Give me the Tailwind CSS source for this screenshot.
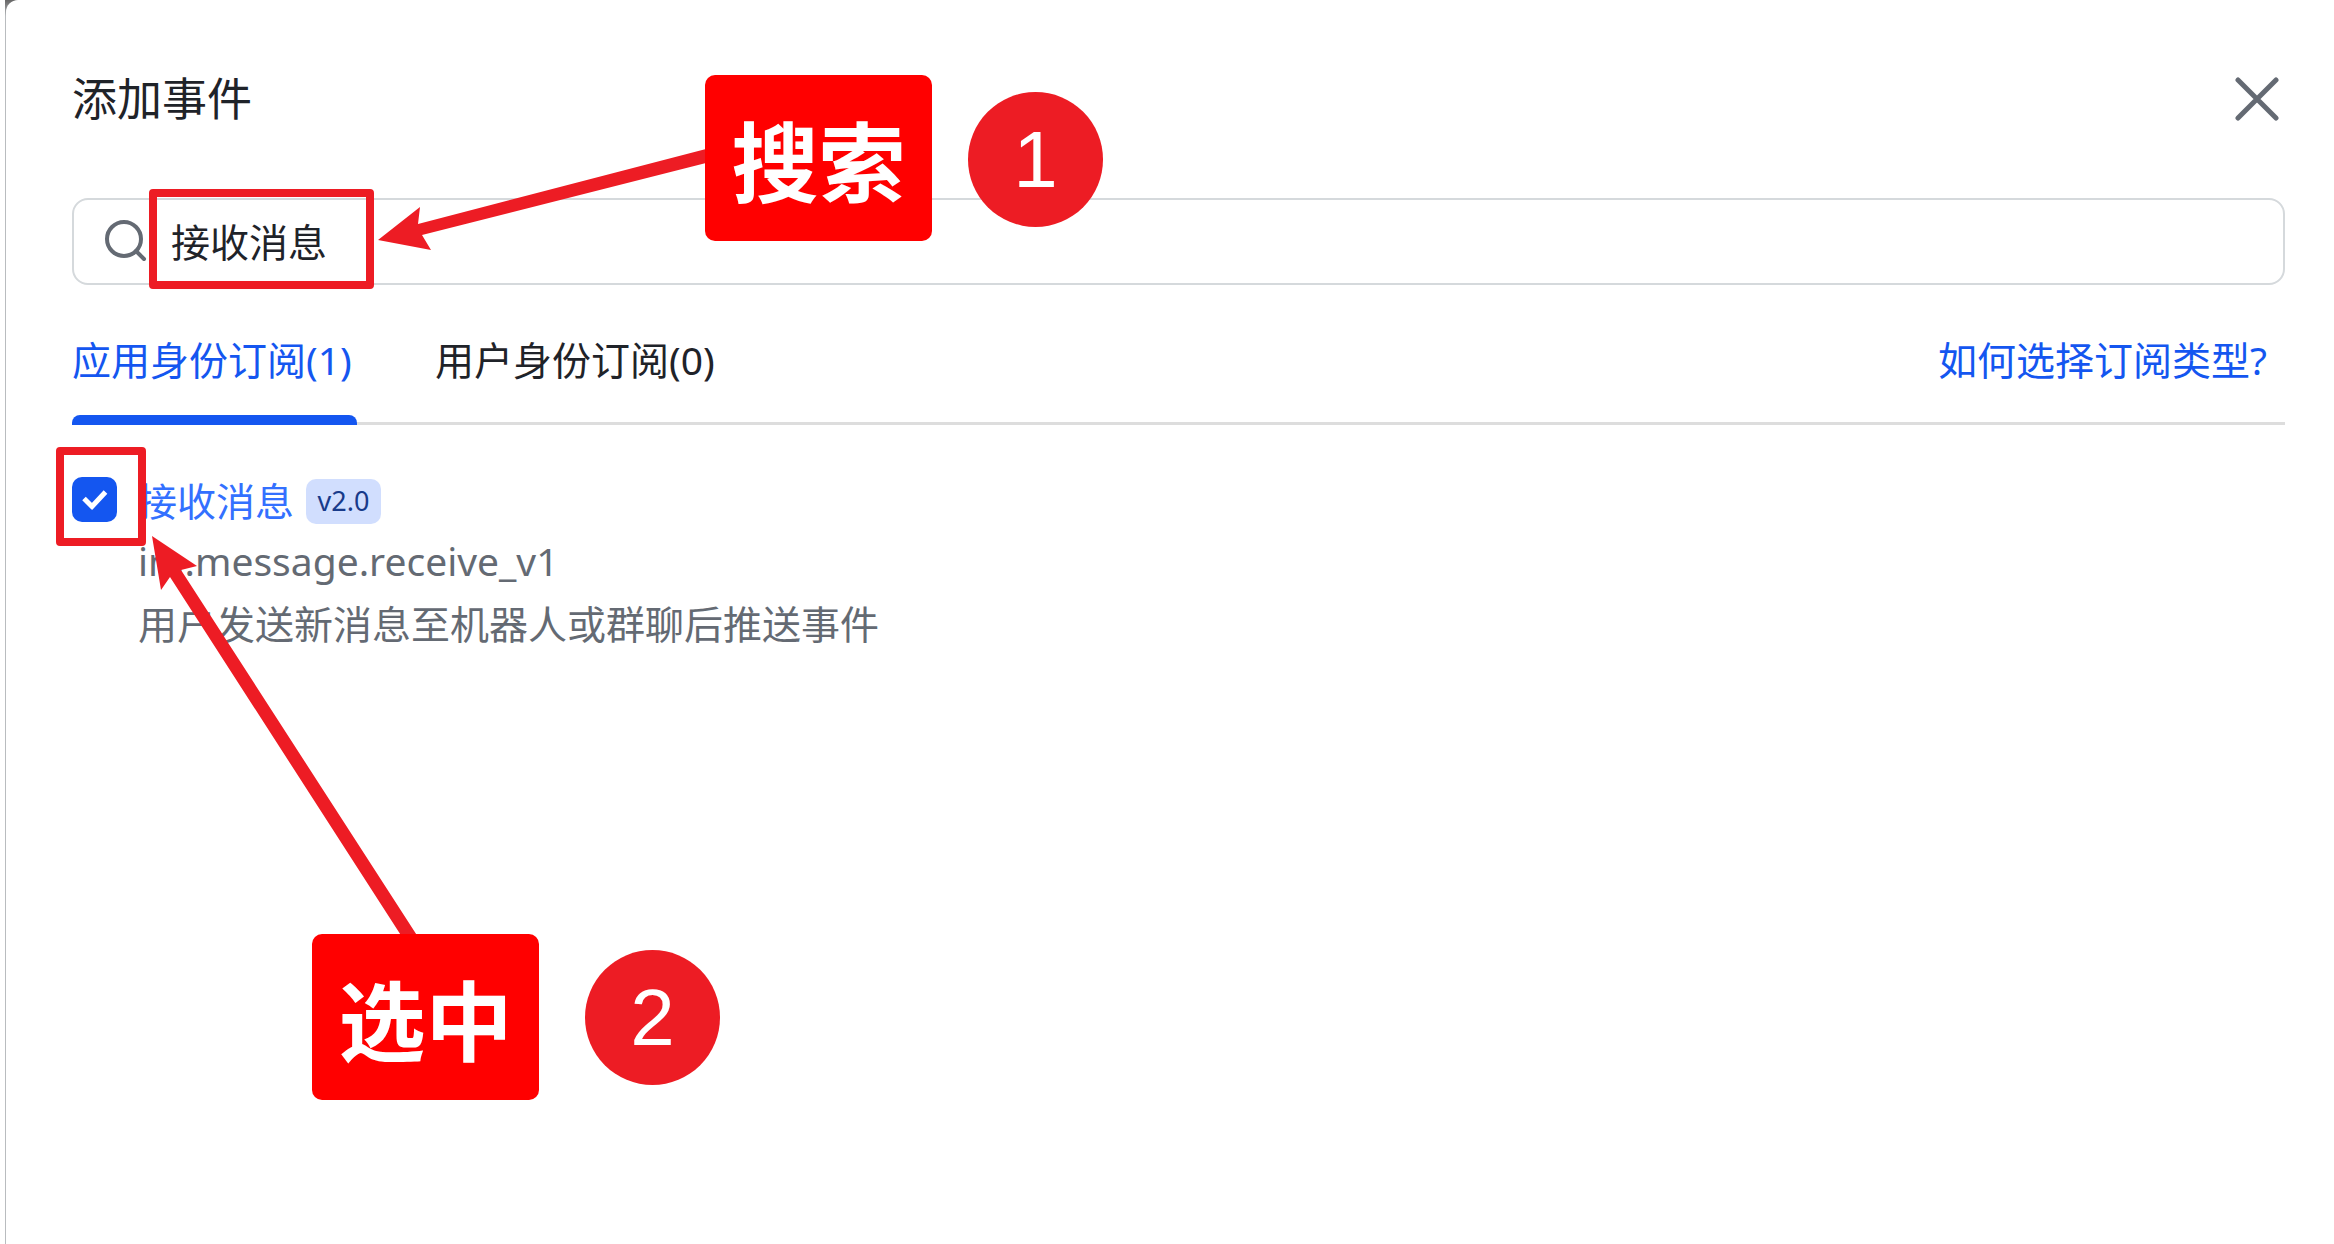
<!DOCTYPE html>
<html lang="zh-CN">
<head>
<meta charset="utf-8">
<title>添加事件</title>
<script src="https://cdn.jsdelivr.net/npm/@tailwindcss/browser@4"></script>
</head>
<body class="bg-white overflow-x-hidden">
<div class="relative ml-[5px] min-h-screen bg-linear-to-b from-[#666] to-[#b9bcbf] to-[16px] font-['Noto_Sans','Noto_Sans_CJK_SC',sans-serif] text-[39px] leading-[60px] text-[#1f2329]">
  <main class="ml-px min-h-screen rounded-tl-[12px] bg-white pt-[66px] pr-[49px] pl-[66px]">
    <header class="flex items-center justify-between">
      <h1 class="text-[45px] leading-[66px]">添加事件</h1>
      <button type="button" aria-label="关闭" class="mr-[6px]">
        <svg class="block size-[44px]" viewBox="0 0 44 44" fill="none" stroke="#646a73" stroke-width="5" stroke-linecap="round"><path d="M3 3l38 38M41 3L3 41"/></svg>
      </button>
    </header>

    <label class="mt-[66px] flex h-[87px] items-center rounded-[16px] border-2 border-[#d5d9dc] pl-[30px]">
      <svg class="size-[44px] shrink-0" viewBox="0 0 44 44" fill="none" stroke="#646a73" stroke-width="4" stroke-linecap="round" aria-hidden="true"><circle cx="20" cy="19" r="17"/><path d="M32 31l8 8"/></svg>
      <input type="text" aria-label="搜索" value="接收消息" class="ml-[23px] min-w-0 flex-1 outline-none">
    </label>

    <nav class="flex h-[140px] justify-between border-b-3 border-[#ddd] pt-[45px]">
      <div class="flex gap-[78px]">
        <button type="button" class="relative -mb-[3px] flex w-[285px] items-start text-[#1456f0]">应用身份订阅(1)<span class="absolute inset-x-0 bottom-0 h-[10px] rounded-t-[8px] bg-[#1456f0]"></span></button>
        <button type="button" class="flex items-start">用户身份订阅(0)</button>
      </div>
      <a href="#" class="mr-[18px] text-[#1456f0]">如何选择订阅类型?</a>
    </nav>

    <section class="mt-[46px] flex gap-[21px]">
      <div class="relative mt-[6px] size-[45px] shrink-0">
        <input id="receive" type="checkbox" checked class="block size-[45px] appearance-none rounded-[10px] bg-[#1456f0]">
        <svg class="pointer-events-none absolute inset-0" viewBox="0 0 45 45" fill="none" stroke="#fff" stroke-width="5" aria-hidden="true"><path d="M12 21.500l8 8L33.500 15"/></svg>
      </div>
      <div class="text-[#646a73]">
        <div class="flex items-center gap-[12px]">
          <label for="receive" class="text-[#3370ff]">接收消息</label>
          <span class="flex h-[45px] w-[75px] items-center justify-center rounded-[10px] bg-[#d1defe] text-[27px] text-[#183a8a]">v2.0</span>
        </div>
        <p>im.message.receive_v1</p>
        <p class="mt-[3px]">用户发送新消息至机器人或群聊后推送事件</p>
      </div>
    </section>
  </main>
</div>

<!-- Step annotations -->
<div class="pointer-events-none absolute top-0 left-0 text-white">
  <svg class="absolute top-0 left-0 h-[940px] w-[720px]" viewBox="0 0 720 940" fill="#ed1c24" aria-hidden="true">
    <path d="M378 240L420 207L418 224L706 149V163L422 235L431 250Z"/>
    <path d="M152 536L197 566L181 570L420 940H404L170 577L161 590Z"/>
  </svg>
  <div class="absolute top-[189px] left-[149px] h-[100px] w-[225px] rounded-[4px] border-8 border-[#ed1c24]"></div>
  <div class="absolute top-[447px] left-[56px] h-[99px] w-[90px] rounded-[4px] border-8 border-[#ed1c24]"></div>
  <div class="absolute top-[75px] left-[705px] flex h-[166px] w-[227px] items-center justify-center rounded-[10px] bg-[#f00] font-['Noto_Sans_CJK_SC',sans-serif] text-[87px] leading-none font-bold">搜索</div>
  <div class="absolute top-[934px] left-[312px] flex h-[166px] w-[227px] items-center justify-center rounded-[10px] bg-[#f00] font-['Noto_Sans_CJK_SC',sans-serif] text-[87px] leading-none font-bold">选中</div>
  <div class="absolute top-[92px] left-[968px] flex size-[135px] items-center justify-center rounded-full bg-[#ed1c24] font-['Liberation_Sans',sans-serif] text-[80px] leading-none">1</div>
  <div class="absolute top-[950px] left-[585px] flex size-[135px] items-center justify-center rounded-full bg-[#ed1c24] font-['Liberation_Sans',sans-serif] text-[80px] leading-none">2</div>
</div>
</body>
</html>
